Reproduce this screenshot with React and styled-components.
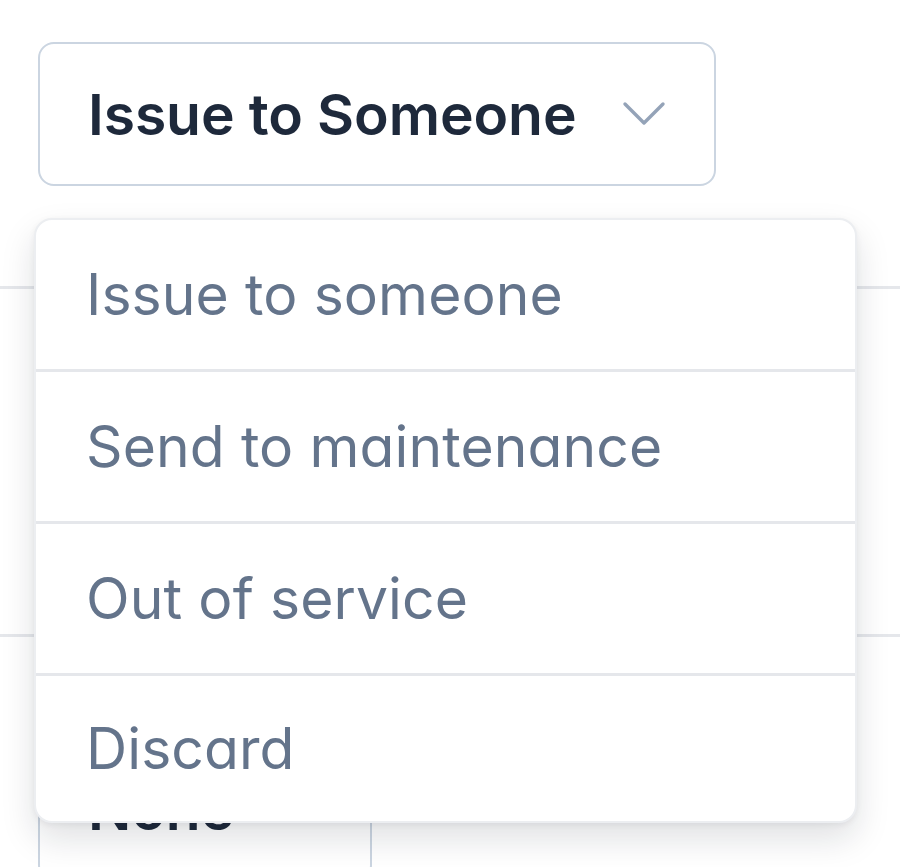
import React from "react";
import styled, { createGlobalStyle } from "styled-components";

const Global = createGlobalStyle`
  html, body { margin: 0; padding: 0; background: #ffffff; }
  body { font-family: Inter, "Noto Sans", sans-serif; font-feature-settings: "cv11"; }
  #root { width: 900px; height: 867px; overflow: hidden; }
`;

const Page = styled.div`
  position: relative;
  width: 900px;
  height: 867px;
  overflow: hidden;
  padding-top: 42px;
  box-sizing: border-box;
`;

const SelectWrap = styled.div`
  position: relative;
  margin-left: 38px;
  width: 678px;
  z-index: 2;
`;

const SelectButton = styled.button`
  box-sizing: border-box;
  width: ${(p) => p.$width}px;
  height: 144px;
  display: flex;
  align-items: center;
  justify-content: space-between;
  padding: 0 48px 0 48px;
  background: #ffffff;
  border: 2.5px solid #cbd5e1;
  border-radius: 16px;
  font-family: Inter, "Noto Sans", sans-serif;
  font-feature-settings: "cv11";
  font-size: 57px;
  font-weight: 600;
  color: #1e293b;
  letter-spacing: -0.1px;
  cursor: pointer;
`;

const Chevron = () => (
  <svg width="44" height="26" viewBox="0 0 44 26" fill="none">
    <path d="M3 3 L22 22 L41 3" stroke="#94a3b8" strokeWidth="3.4" strokeLinecap="round" strokeLinejoin="round" />
  </svg>
);

const Menu = styled.ul`
  position: absolute;
  top: 176px;
  left: -4px;
  width: 823px;
  margin: 0;
  padding: 0;
  list-style: none;
  box-sizing: border-box;
  background: #ffffff;
  border: 2px solid #eceef1;
  border-radius: 18px;
  box-shadow: 0 16px 34px rgba(15, 23, 42, 0.13), 0 2px 6px rgba(15, 23, 42, 0.06);
  overflow: hidden;
`;

const MenuItem = styled.li`
  height: ${(p) => (p.$last ? 145 : 149)}px;
  display: flex;
  align-items: center;
  padding-left: 50px;
  font-size: 57px;
  font-weight: 400;
  color: #64748b;
  letter-spacing: 0.1px;
  border-top: ${(p) => (p.$first ? "none" : "3px solid #e5e7eb")};
`;

const Divider = styled.div`
  height: 3px;
  background: #e5e7eb;
  margin-top: ${(p) => p.$gap}px;
`;

const LowerSelect = styled.div`
  margin-top: 100px;
  margin-left: 38px;
`;

const options = ["Issue to someone", "Send to maintenance", "Out of service", "Discard"];

export default function App() {
  return (
    <Page>
      <Global />
      <SelectWrap>
        <SelectButton $width={678}>
          <span>Issue to Someone</span>
          <Chevron />
        </SelectButton>
        <Menu>
          {options.map((o, i) => (
            <MenuItem key={o} $first={i === 0} $last={i === options.length - 1}>{o}</MenuItem>
          ))}
        </Menu>
      </SelectWrap>
      <Divider $gap={100} />
      <Divider $gap={345} />
      <LowerSelect>
        <SelectButton $width={334}>
          <span>None</span>
          <Chevron />
        </SelectButton>
      </LowerSelect>
    </Page>
  );
}
